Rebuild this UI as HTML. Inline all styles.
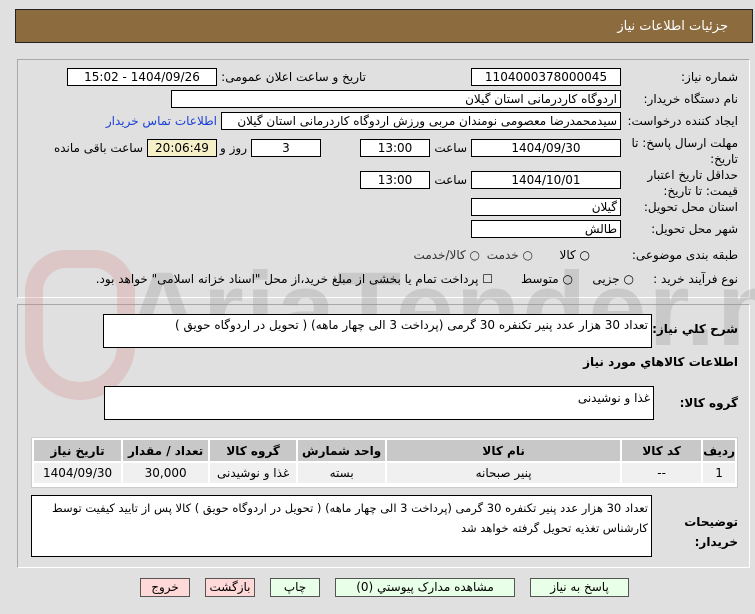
<!DOCTYPE html>
<html><head><meta charset="utf-8"><style>
*{box-sizing:border-box;margin:0;padding:0}
body{width:755px;height:614px;background:#e0e0e0;font-family:Tahoma,"DejaVu Sans",sans-serif;font-size:12px;color:#000;position:relative;overflow:hidden}
.a{position:absolute;white-space:nowrap}
.box{position:absolute;background:#fff;border:1px solid #000;font-size:12px;direction:rtl;padding:0 3px;line-height:16px;white-space:nowrap;overflow:hidden}
.c{text-align:center}
.lbl{position:absolute;direction:rtl;text-align:right;font-size:12px;white-space:nowrap}
.panel{position:absolute;border:1px solid #a8a8a8;border-right-color:#fff;border-bottom-color:#fff}
table{border-collapse:separate;border-spacing:2px}
td,th{font-size:12px;text-align:center}
th{background:#c8c8c8;height:21px;font-weight:bold}
td{background:#f0f0f0;height:20px}
.btn{position:absolute;border:1px solid #555;font-size:12px;text-align:center;line-height:16px;height:19px}
.g{background:#e8ffe8}.r{background:#ffd8d8}
.wm{position:absolute;font-family:"Liberation Sans",sans-serif;font-weight:bold;font-size:105px;color:rgba(150,150,150,0.3);left:125px;top:250px;letter-spacing:2px}
</style></head><body>
<div class="a" style="left:15px;top:9px;width:738px;height:34px;background:#8c6b3f;border:1px solid #222"></div>
<div class="lbl" style="right:27px;top:19px;color:#fff;font-size:13px">جزئیات اطلاعات نیاز</div>

<div class="panel" style="left:17px;top:59px;width:733px;height:239px"></div>
<div class="panel" style="left:17px;top:304px;width:733px;height:264px"></div>
<div class="wm">AriaTender.net</div>
<div class="a" style="left:25px;top:250px;width:110px;height:150px;border:18px solid rgba(210,120,120,0.25);border-radius:45px 45px 60px 60px"></div>

<div class="lbl" style="right:17px;top:70px">شماره نیاز:</div>
<div class="box c" style="left:471px;top:68px;width:150px;height:18px">1104000378000045</div>
<div class="lbl" style="right:389px;top:70px">تاریخ و ساعت اعلان عمومی:</div>
<div class="box c" style="left:67px;top:68px;width:150px;height:18px">1404/09/26 - 15:02</div>

<div class="lbl" style="right:17px;top:92px">نام دستگاه خریدار:</div>
<div class="box" style="left:171px;top:90px;width:450px;height:18px">اردوگاه کاردرمانی استان گیلان</div>

<div class="lbl" style="right:17px;top:114px">ایجاد کننده درخواست:</div>
<div class="box" style="left:221px;top:112px;width:400px;height:18px">سیدمحمدرضا معصومی نومندان مربی ورزش اردوگاه کاردرمانی استان گیلان</div>
<div class="lbl" style="right:538px;top:114px;color:#1a3fd8">اطلاعات تماس خریدار</div>

<div class="lbl" style="right:17px;top:135px;line-height:16px">مهلت ارسال پاسخ: تا<br>تاریخ:</div>
<div class="box c" style="left:471px;top:139px;width:150px;height:18px">1404/09/30</div>
<div class="lbl" style="right:288px;top:141px">ساعت</div>
<div class="box c" style="left:360px;top:139px;width:70px;height:18px">13:00</div>
<div class="box c" style="left:251px;top:139px;width:70px;height:18px">3</div>
<div class="lbl" style="right:508px;top:141px">روز و</div>
<div class="box c" style="left:147px;top:139px;width:70px;height:18px;background:#f5f0c8">20:06:49</div>
<div class="lbl" style="right:612px;top:141px">ساعت باقی مانده</div>

<div class="lbl" style="right:17px;top:167px;line-height:16px">حداقل تاریخ اعتبار<br>قیمت: تا تاریخ:</div>
<div class="box c" style="left:471px;top:171px;width:150px;height:18px">1404/10/01</div>
<div class="lbl" style="right:288px;top:173px">ساعت</div>
<div class="box c" style="left:360px;top:171px;width:70px;height:18px">13:00</div>

<div class="lbl" style="right:17px;top:200px">استان محل تحویل:</div>
<div class="box" style="left:471px;top:198px;width:150px;height:18px">گیلان</div>
<div class="lbl" style="right:17px;top:222px">شهر محل تحویل:</div>
<div class="box" style="left:471px;top:220px;width:150px;height:18px">طالش</div>

<div class="lbl" style="right:17px;top:248px">طبقه بندی موضوعی:</div>
<div class="lbl" style="right:165px;top:248px">○ کالا</div>
<div class="lbl" style="right:222px;top:248px;color:#333">○ خدمت</div>
<div class="lbl" style="right:275px;top:248px;color:#333">○ کالا/خدمت</div>

<div class="lbl" style="right:17px;top:272px">نوع فرآیند خرید :</div>
<div class="lbl" style="right:121px;top:272px">○ جزیی</div>
<div class="lbl" style="right:182px;top:272px">○ متوسط</div>
<div class="lbl" style="right:262px;top:272px">☐ پرداخت تمام یا بخشی از مبلغ خرید،از محل "اسناد خزانه اسلامی" خواهد بود.</div>

<div class="lbl" style="right:17px;top:322px;font-weight:bold">شرح کلي نیاز:</div>
<div class="box" style="left:103px;top:314px;width:549px;height:34px;padding-top:2px">تعداد 30 هزار عدد پنیر تکنفره 30 گرمی (پرداخت 3 الی چهار ماهه) ( تحویل در اردوگاه حویق )</div>
<div class="lbl" style="right:17px;top:355px;font-weight:bold">اطلاعات کالاهاي مورد نیاز</div>
<div class="lbl" style="right:17px;top:396px;font-weight:bold">گروه کالا:</div>
<div class="box" style="left:104px;top:386px;width:550px;height:34px;padding-top:3px">غذا و نوشیدنی</div>

<div class="a" style="left:31px;top:437px;width:707px;height:51px;background:#fff;border:1px solid #ccc">
<table dir="rtl" style="width:705px">
<tr><th style="width:29px">ردیف</th><th style="width:79px">کد کالا</th><th style="width:233px">نام کالا</th><th style="width:87px">واحد شمارش</th><th style="width:86px">گروه کالا</th><th style="width:85px">تعداد / مقدار</th><th>تاریخ نیاز</th></tr>
<tr><td>1</td><td>--</td><td>پنیر صبحانه</td><td>بسته</td><td>غذا و نوشیدنی</td><td>30,000</td><td>1404/09/30</td></tr>
</table></div>

<div class="lbl" style="right:17px;top:512px;font-weight:bold;line-height:20px">توضیحات<br>خریدار:</div>
<div class="box" style="left:31px;top:495px;width:621px;height:62px;padding-top:2px;white-space:normal;line-height:20px;font-size:11.5px">تعداد 30 هزار عدد پنیر تکنفره 30 گرمی (پرداخت 3 الی چهار ماهه) ( تحویل در اردوگاه حویق ) کالا پس از تایید کیفیت توسط کارشناس تغذیه تحویل گرفته خواهد شد</div>

<div class="btn r" style="left:140px;top:578px;width:50px">خروج</div>
<div class="btn r" style="left:205px;top:578px;width:50px">بازگشت</div>
<div class="btn g" style="left:270px;top:578px;width:50px">چاپ</div>
<div class="btn g" style="left:335px;top:578px;width:180px">مشاهده مدارک پیوستي (0)</div>
<div class="btn g" style="left:530px;top:578px;width:99px">پاسخ به نیاز</div>
</body></html>
